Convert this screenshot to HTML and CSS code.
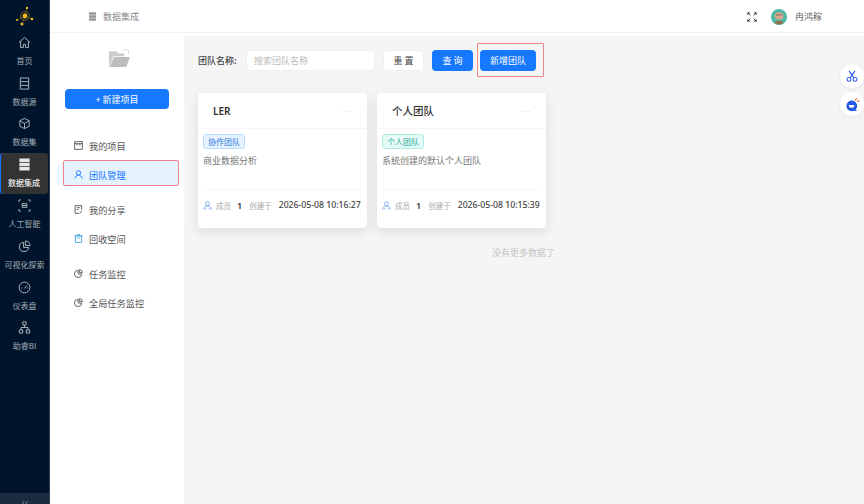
FILE: index.html
```html
<!DOCTYPE html>
<html lang="zh">
<head>
<meta charset="utf-8">
<title>团队管理</title>
<link rel="stylesheet" href="styles.css">
</head>
<body>
<div class="app">
  <aside class="rail">
    <svg class="logo" viewBox="0 0 20 20" width="20" height="20"><circle cx="10" cy="10" r="4.300" fill="none" stroke="#6f5a1c" stroke-width="1"/><g stroke="#a8841f" stroke-width=".5" fill="none"><path d="M12 2 10 10 2 14M10 10l7 3M10 10 7 18"/></g><g fill="#f5b81f"><circle cx="10" cy="10" r="2.400"/><circle cx="12" cy="2" r="1.200"/><circle cx="2" cy="14" r="1.100"/><circle cx="17" cy="13" r="1.300"/><circle cx="7" cy="18" r="1.500"/></g></svg>
    <nav class="rail-nav">
      <a class="rail-item">
        <svg viewBox="0 0 14 14" class="rail-icon"><path d="M1 7 7 1.500 13 7M2.800 5.800V12.500h3V9h2.400v3.500h3V5.800"/></svg>
        <span>首页</span>
      </a>
      <a class="rail-item">
        <svg viewBox="0 0 14 14" class="rail-icon"><path d="M2.500 1h9v12h-9zM2.500 5h9M2.500 9h9"/></svg>
        <span>数据源</span>
      </a>
      <a class="rail-item">
        <svg viewBox="0 0 14 14" class="rail-icon"><path d="M7 1.500 12 4v6l-5 2.500L2 10V4zM2 4l5 3 5-3M7 7v5.500"/></svg>
        <span>数据集</span>
      </a>
      <a class="rail-item is-active">
        <svg viewBox="0 0 14 14" class="rail-icon-solid"><path d="M1.500.5h11v3.700h-11zM1.500 5.100h11v3.800h-11zM1.500 9.800h11v3.700h-11z"/></svg>
        <span>数据集成</span>
      </a>
      <a class="rail-item">
        <svg viewBox="0 0 14 14" class="rail-icon"><path d="M1 3V1h2M11 1h2v2M13 11v2h-2M3 13H1v-2M4.500 5h5v4h-5zM4.500 7h5"/></svg>
        <span>人工智能</span>
      </a>
      <a class="rail-item">
        <svg viewBox="0 0 14 14" class="rail-icon"><path d="M6 2.500a5 5 0 1 0 5.500 5.500H6zM8 1a5 5 0 0 1 5 5H8z"/></svg>
        <span>可视化探索</span>
      </a>
      <a class="rail-item">
        <svg viewBox="0 0 14 14" class="rail-icon"><circle cx="7" cy="7" r="5.800"/><path d="M7 8l2.500-3M3.500 7.500h1M9.500 7.500h1"/></svg>
        <span>仪表盘</span>
      </a>
      <a class="rail-item">
        <svg viewBox="0 0 14 14" class="rail-icon"><path d="M5.200 1h3.600v3.400H5.200zM1.500 9.600h3.600V13H1.500zM8.900 9.600h3.600V13H8.900zM7 4.400V7M3.300 9.600V7h7.400v2.600"/></svg>
        <span>助睿BI</span>
      </a>
    </nav>
    <div class="rail-collapse">
      <svg viewBox="0 0 10 6" class="collapse-icon"><path d="M4 1 1.500 6M8 1 5.500 6"/></svg>
    </div>
  </aside>

  <div class="main">
    <header class="topbar">
      <div class="crumb">
        <svg viewBox="0 0 14 14" class="crumb-icon"><path d="M1.500.5h11v3.700h-11zM1.500 5.100h11v3.800h-11zM1.500 9.800h11v3.700h-11z"/></svg>
        <span>数据集成</span>
      </div>
      <div class="user">
        <svg viewBox="0 0 12 12" class="expand"><path d="M1 1l3 3M1 1v2.200M1 1h2.200M11 1 8 4M11 1v2.200M11 1H8.800M1 11l3-3M1 11V8.800M1 11h2.200M11 11 8 8M11 11V8.800M11 11H8.800"/></svg>
        <svg viewBox="0 0 16 16" class="avatar"><circle cx="8" cy="8" r="8" fill="#4fb8a4"/><ellipse cx="8" cy="7" rx="4.500" ry="3.800" fill="#d9a58a"/><path d="M3.500 14c1-3 8-3 9 0a8 8 0 0 1-9 0z" fill="#8c7350"/><rect x="5" y="5" width="6" height="1.800" fill="#a08a78"/></svg>
        <span>冉鸿稼</span>
      </div>
    </header>

    <div class="body">
      <aside class="side">
        <svg viewBox="0 0 24 22" class="folder"><path d="M1 21V3.500h8L11.500 6H18v3H6L1 21z" fill="#cdcdcd"/><path d="M6.500 10H24l-4 11H1.500z" fill="#bdbdbd"/><path d="M15 3.500c3-2.500 5.500-2.500 7.500-.5v4" fill="none" stroke="#d4d4d4" stroke-width="1"/></svg>
        <button class="new-project">+ 新建项目</button>
        <ul class="menu">
          <li class="menu-item">
            <svg viewBox="0 0 10 10" class="menu-icon"><path d="M.7.7h8.600v8.600H.7zM.7 3h8.600M3.500 3v2M6.500 3v2"/></svg>我的项目
          </li>
          <li class="menu-item is-active">
            <svg viewBox="0 0 10 10" class="menu-icon"><circle cx="5" cy="3.200" r="2.400"/><path d="M1 9.500c.4-5 7.600-5 8 0"/></svg>团队管理
          </li>
          <li class="menu-item after-active">
            <svg viewBox="0 0 10 10" class="menu-icon"><path d="M8.500 5V.7H1.200v8.600h4.500M3 3h3.500M3 5h2M6.500 9.300l2.500-3"/></svg>我的分享
          </li>
          <li class="menu-item trash">
            <svg viewBox="0 0 10 10" class="menu-icon"><path d="M1.500 2h7v7.300h-7zM.5 2h9M3.500.7h3M3.500 4.500h3"/></svg>回收空间
          </li>
          <li class="menu-item gap-top">
            <svg viewBox="0 0 10 10" class="menu-icon"><path d="M4.500 1.500a4 4 0 1 0 4 4h-4zM6 .7a3.300 3.300 0 0 1 3.300 3.300H6z"/></svg>任务监控
          </li>
          <li class="menu-item">
            <svg viewBox="0 0 10 10" class="menu-icon"><path d="M4.500 1.500a4 4 0 1 0 4 4h-4zM6 .7a3.300 3.300 0 0 1 3.300 3.300H6z"/></svg>全局任务监控
          </li>
        </ul>
      </aside>

      <main class="content">
        <div class="filters">
          <label class="filter-label">团队名称:</label>
          <div class="search">搜索团队名称</div>
          <button class="btn btn-plain">重 置</button>
          <button class="btn btn-primary">查 询</button>
          <div class="highlight"><button class="btn btn-primary btn-wide">新增团队</button></div>
        </div>

        <div class="cards">
          <article class="card">
            <div class="card-head">
              <h3 class="latin">LER</h3>
              <span class="more">···</span>
            </div>
            <div class="card-body">
              <span class="tag tag-blue">协作团队</span>
              <p>商业数据分析</p>
            </div>
            <div class="card-foot">
              <svg viewBox="0 0 10 10" class="people"><circle cx="5" cy="3" r="2.200"/><path d="M.7 9.300C1 6.500 3 5.600 5 5.600s4 .9 4.300 3.700M2 9.300l1.500-1.500M8 9.300 6.500 7.800"/></svg>
              <span class="meta">成员</span>
              <b class="num">1</b>
              <span class="meta">创建于</span>
              <b class="date">2026-05-08 10:16:27</b>
            </div>
          </article>
          <article class="card">
            <div class="card-head">
              <h3>个人团队</h3>
              <span class="more">···</span>
            </div>
            <div class="card-body">
              <span class="tag tag-teal">个人团队</span>
              <p>系统创建的默认个人团队</p>
            </div>
            <div class="card-foot">
              <svg viewBox="0 0 10 10" class="people"><circle cx="5" cy="3" r="2.200"/><path d="M.7 9.300C1 6.500 3 5.600 5 5.600s4 .9 4.300 3.700M2 9.300l1.500-1.500M8 9.300 6.500 7.800"/></svg>
              <span class="meta">成员</span>
              <b class="num">1</b>
              <span class="meta">创建于</span>
              <b class="date">2026-05-08 10:15:39</b>
            </div>
          </article>
        </div>
        <p class="no-more">没有更多数据了</p>

        <div class="float-btn float-cut">
          <svg viewBox="0 0 14 14" class="float-icon"><circle cx="3.500" cy="11" r="2.200"/><circle cx="10.500" cy="11" r="2.200"/><path d="M4.800 9.200 10.500 1M9.200 9.200 3.500 1"/></svg>
        </div>
        <div class="float-btn float-bot">
          <svg viewBox="0 0 16 16" class="float-bot-icon"><path d="M1.500 9.500a5.700 5.700 0 1 1 10 3.700L13 15l-3.500-.3A5.700 5.700 0 0 1 1.500 9.500z" fill="#2259e0"/><path d="M4 8.500h6a3 3 0 0 1-6 0z" fill="#fff"/><path d="M11 3.500l1.500-2M13 5l2.500-1" stroke="#f0532a" stroke-width="1.300"/></svg>
        </div>
      </main>
    </div>
  </div>
</div>
</body>
</html>
```

FILE: styles.css
```css
* { box-sizing: border-box; }
html, body { margin: 0; height: 100%; overflow: hidden; }
body {
  font-family: "Noto Sans CJK SC", "Liberation Sans", sans-serif;
  font-size: 10px;
  color: #444;
  background: #fff;
}
.app { display: flex; height: 504px; }

/* left rail */
.rail {
  width: 50px;
  flex: none;
  background: #00152b;
  border-right: 1px solid #2a3b4e;
  display: flex;
  flex-direction: column;
  align-items: center;
}
.logo { margin-top: 6px; }
.rail-nav {
  flex: 1;
  width: 100%;
  margin-top: 4.500px;
  display: flex;
  flex-direction: column;
}
.rail-item {
  height: 40.800px;
  flex: none;
  display: flex;
  flex-direction: column;
  align-items: center;
  justify-content: center;
  gap: 7px;
  color: #a4acb5;
  font-size: 8px;
  line-height: 10px;
  white-space: nowrap;
}
.rail-icon { width: 13px; height: 13px; fill: none; stroke: #b5bbc2; stroke-width: 1; }
.rail-icon-solid { width: 13px; height: 13px; fill: #e8e8e8; }
.rail-item.is-active {
  width: 48px;
  background: #333;
  border-radius: 3px;
  color: #f0f0f0;
  font-weight: 500;
  box-shadow: inset 1px 0 0 #1677ff;
}
.rail-collapse {
  width: 100%;
  height: 11px;
  background: #1c2c3e;
  display: flex;
  justify-content: center;
  padding-top: 7px;
}
.collapse-icon { width: 8px; height: 5px; fill: none; stroke: #8b95a0; stroke-width: 1; }

/* main */
.main { flex: 1; min-width: 0; display: flex; flex-direction: column; }
.topbar {
  height: 32px;
  flex: none;
  margin-top: 1px;
  display: flex;
  align-items: center;
  justify-content: space-between;
  padding: 0 42px 0 38px;
  border-bottom: 1px solid #f2f2f2;
  color: #888;
  font-size: 9px;
}
.crumb { display: flex; align-items: center; gap: 6px; }
.crumb-icon { width: 9px; height: 9px; fill: #999; }
.user { display: flex; align-items: center; color: #666; }
.expand { width: 10px; height: 10px; fill: none; stroke: #333; stroke-width: 1.200; margin-right: 14px; }
.avatar { width: 16px; height: 16px; margin-right: 8px; }

.body { flex: 1; display: flex; min-height: 0; }

/* project side panel */
.side {
  width: 134px;
  flex: none;
  display: flex;
  flex-direction: column;
  align-items: center;
}
.folder { width: 22px; height: 20px; margin: 15px 0 0 3px; }
.new-project {
  width: 104px;
  height: 20px;
  margin-top: 21px;
  border: 0;
  border-radius: 4px;
  background: #1677ff;
  color: #fff;
  font: inherit;
  font-size: 9px;
  padding: 0;
}
.menu { list-style: none; margin: 22px 0 0; padding: 0; width: 100%; }
.menu-item {
  height: 29px;
  display: flex;
  align-items: center;
  gap: 6px;
  padding-left: 24px;
  color: #555;
  font-size: 9.200px;
}
.menu-icon { width: 9px; height: 9px; flex: none; fill: none; stroke: #555; stroke-width: 1; }
.menu-item.is-active {
  position: relative;
  height: 26px;
  margin: 0 5px 0 13px;
  padding: 3px 0 0 10px;
  background: #e6f3ff;
  border: 1px solid #f0808a;
  border-radius: 2px;
  color: #1677ff;
}
.menu-item.is-active::before {
  content: "";
  position: absolute;
  left: -7px;
  top: 1px;
  width: 20px;
  height: 25px;
  background: #eef6ff;
  border-radius: 6px;
  z-index: -1;
}
.menu-item.is-active .menu-icon { stroke: #1677ff; }
.menu-item.after-active { margin-top: 9px; }
.menu-item.gap-top { margin-top: 6px; }
.trash .menu-icon { stroke: #3fa7e0; }

/* content */
.content {
  flex: 1;
  min-width: 0;
  position: relative;
  margin-top: 3px;
  background: #f5f5f6;
  padding: 7px 14px;
}
.filters { display: flex; align-items: center; height: 34px; }
.filter-label { color: #444; font-size: 9px; font-weight: 500; width: 48px; flex: none; }
.search {
  width: 129px;
  height: 21px;
  background: #fff;
  border: 1px solid #f0f0f0;
  border-radius: 4px;
  padding-left: 7px;
  color: #bbb;
  font-size: 9px;
  line-height: 19px;
}
.btn {
  height: 21px;
  width: 41px;
  border: 0;
  border-radius: 4px;
  font: inherit;
  font-size: 9px;
  padding: 0;
}
.btn-plain { background: #fff; color: #444; border: 1px solid #f0f0f0; margin-left: 8px; }
.btn-primary { background: #1677ff; color: #fff; margin-left: 8px; }
.btn-wide { width: 56px; margin-left: 0; }
.highlight {
  width: 67px;
  height: 34px;
  margin-left: 4px;
  border: 1px solid #f0888a;
  border-radius: 1px;
  display: flex;
  align-items: center;
  padding-left: 2px;
}

.cards { display: flex; gap: 10px; margin-top: 16px; }
.card {
  width: 169px;
  height: 135px;
  background: #fff;
  border-radius: 3px;
  box-shadow: 0 4px 12px rgba(0, 0, 0, .1);
  display: flex;
  flex-direction: column;
}
.card-head {
  height: 36px;
  flex: none;
  display: flex;
  align-items: center;
  justify-content: space-between;
  padding: 0 15px;
  border-bottom: 1px solid #f6f6f6;
}
.card-head h3 { margin: 0; font-size: 10.500px; font-weight: 500; color: #333; }
.card-head h3.latin { font-family: "Noto Sans", sans-serif; font-size: 10px; font-weight: 600; }
.more { color: #cfdcd8; font-family: "Liberation Sans", sans-serif; font-size: 9px; letter-spacing: 1px; }
.card-body { flex: 1; padding: 4px 5px 0; }
.card-body p { margin: 5px 0 0; font-size: 9px; line-height: 13px; color: #777; }
.tag {
  display: inline-block;
  height: 15px;
  padding: 0 4px;
  border-radius: 3px;
  font-size: 8px;
  line-height: 13px;
}
.tag-blue { background: #e6f3ff; border: 1px solid #b8dcff; color: #2b74e0; }
.tag-teal { background: #e6fbf8; border: 1px solid #a8ece2; color: #2aa899; }
.card-foot {
  height: 39px;
  flex: none;
  margin: 0 5px;
  padding-bottom: 8px;
  border-top: 1px solid #f6f6f6;
  display: flex;
  align-items: center;
  white-space: nowrap;
}
.people { width: 9px; height: 9px; flex: none; fill: none; stroke: #5a96f0; stroke-width: .8; margin-right: 4px; }
.meta { color: #aaa; font-size: 7.500px; }
.num { color: #333; font-family: "Noto Sans", sans-serif; font-size: 9px; font-weight: 600; margin: 0 7px 0 6px; }
.date { color: #444; font-family: "Noto Sans", sans-serif; font-size: 8.700px; font-weight: 500; margin-left: 7px; }
.no-more { margin: 18px 0 0; width: 348px; padding-left: 294px; white-space: nowrap; color: #c4c4c4; font-size: 9px; line-height: 13px; }

.float-btn {
  position: absolute;
  right: 0;
  width: 24px;
  height: 24px;
  background: #fff;
  border-radius: 50%;
  box-shadow: 0 1px 4px rgba(0, 0, 0, .06);
  display: flex;
  align-items: center;
  justify-content: center;
}
.float-cut { top: 28px; }
.float-bot { top: 56px; }
.float-icon { width: 12px; height: 12px; fill: none; stroke: #2f5fe0; stroke-width: 1.300; }
.float-bot-icon { width: 15px; height: 15px; }
```
